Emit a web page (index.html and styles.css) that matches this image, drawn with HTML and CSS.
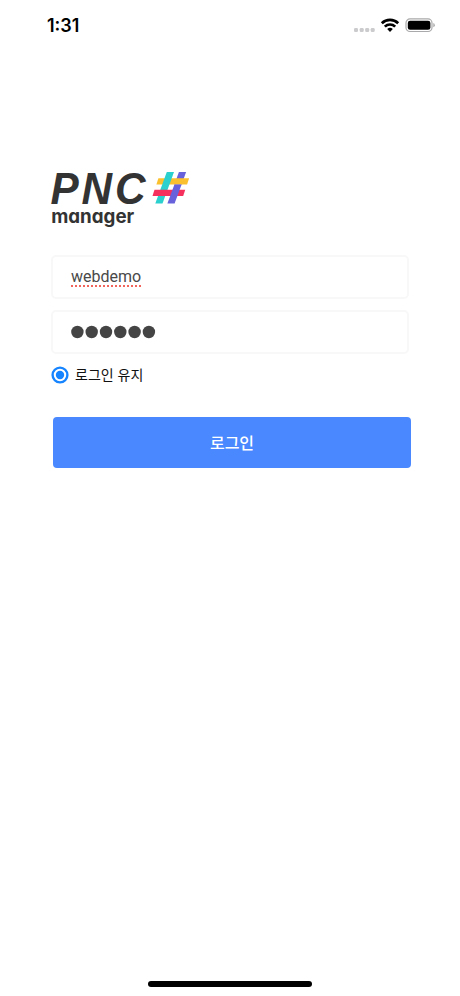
FILE: index.html
```html
<!DOCTYPE html>
<html lang="ko">
<head>
<meta charset="utf-8">
<title>PNC manager</title>
<link rel="stylesheet" href="styles.css">
</head>
<body>
<div class="screen">
  <header class="status">
    <span class="time">1:31</span>
    <svg class="indicators" width="84" height="18" viewBox="0 0 84 18">
      <g fill="#cbcbcd"><rect x="1" y="11" width="4" height="4" rx="1.3"/><rect x="6.7" y="11" width="4" height="4" rx="1.3"/><rect x="12.2" y="11" width="4" height="4" rx="1.3"/><rect x="17.7" y="11" width="4" height="4" rx="1.3"/></g>
      <g fill="none" stroke="#000" stroke-width="2.7"><path d="M28.8 6.2a11.8 11.8 0 0 1 16.4 0"/><path d="M31.8 9.6a7.5 7.5 0 0 1 10.4 0"/></g>
      <path d="M34.2 12.1a4 4 0 0 1 5.6 0L37 15z"/>
      <rect x="53" y="1.9" width="26" height="12.6" rx="4" fill="none" stroke="#a9a9ab" stroke-width="1.2"/>
      <rect x="54.8" y="3.7" width="22.6" height="9" rx="2.3"/>
      <path d="M80.3 6.1q1.5.5 1.5 2.1t-1.5 2.1z" fill="#a9a9ab"/>
    </svg>
  </header>
  <main class="login">
    <svg class="logo" width="150" height="76" viewBox="45 154 150 76">
      <text class="brand" transform="translate(50.5 204) scale(.94 1)" x="0 33 68.5" y="0">PNC</text>
      <text class="product" x="51.2" y="222.8" textLength="83" lengthAdjust="spacingAndGlyphs">manager</text>
      <path fill="#6762dc" d="M178.9 172h7.2l-4.5 12.4h-7.2z"/>
      <path fill="#fbc02d" d="M158.4 178.2h30.7l-2 6.2h-30.7z"/>
      <path fill="#29d0ce" d="M166.8 172h7.2l-11.5 31.5h-7.2z"/>
      <path fill="#f5305c" d="M154.5 189.8h30.7l-2 6.2h-30.7z"/>
      <path fill="#6762dc" d="M174.4 184.4h7.2l-7 19.1h-7.2z"/>
    </svg>
    <form class="form">
      <div class="field"><span class="username">webdemo</span></div>
      <div class="field" aria-label="비밀번호"><svg class="dots" width="86" height="14" viewBox="0 0 86 14"><circle cx="6.4" cy="7" r="6.2"/><circle cx="20.7" cy="7" r="6.2"/><circle cx="35" cy="7" r="6.2"/><circle cx="49.3" cy="7" r="6.2"/><circle cx="63.6" cy="7" r="6.2"/><circle cx="77.9" cy="7" r="6.2"/></svg></div>
      <label class="keep"><svg class="radio" width="18" height="18" viewBox="0 0 18 18"><circle cx="9" cy="9" r="7.4" fill="#fff" stroke="#1684ff" stroke-width="2.4"/><circle cx="9" cy="9" r="4.2" fill="#1684ff"/></svg><span class="keep-text">로그인 유지</span></label>
      <button class="submit" type="button">로그인</button>
    </form>
  </main>
  <div class="home"></div>
</div>
</body>
</html>
```
FILE: styles.css
```css
* { box-sizing: border-box; }
body { margin: 0; background: #fff; font-family: Inter, "Noto Sans CJK KR", sans-serif; }
.screen { width: 460px; height: 996px; display: flex; flex-direction: column; }
.status { height: 154px; padding: 17px 23px 0 47px; display: flex; justify-content: space-between; align-items: flex-start; }
.time { font-size: 18px; line-height: 18px; font-weight: 600; color: #000; }
.indicators { display: block; }
.login { flex: 1; padding-left: 45px; }
.logo { display: block; }
.brand { font: italic bold 45px "Liberation Sans", sans-serif; fill: #333; }
.product { font: 700 19px Inter, sans-serif; font-feature-settings: "cv11"; fill: #333; }
.form { padding: 25px 0 0 6px; display: flex; flex-direction: column; align-items: flex-start; }
.field { width: 358px; height: 44px; margin-bottom: 11px; padding-left: 18px; border: 2px solid #f8f8f8; border-radius: 5px; display: flex; align-items: center; }
.username { font-family: Roboto, sans-serif; font-size: 16px; line-height: 18px; color: #494949; text-decoration: underline dotted #f0645c 2px; text-underline-offset: 3px; text-decoration-skip-ink: none; }
.dots { display: block; fill: #444; }
.keep { height: 18px; margin-top: 1px; display: flex; align-items: center; gap: 6px; }
.radio { display: block; }
.keep-text { font-size: 14px; line-height: 18px; color: #111; }
.submit { width: 358px; height: 51px; margin: 33px 0 0 2px; padding: 0; border: 0; border-radius: 4px; background: #4988ff; color: #fff; font: 500 16px/49px "Noto Sans CJK KR", sans-serif; }
.home { width: 164px; height: 6px; margin: 0 0 9px 148px; border-radius: 3px; background: #000; }
```
